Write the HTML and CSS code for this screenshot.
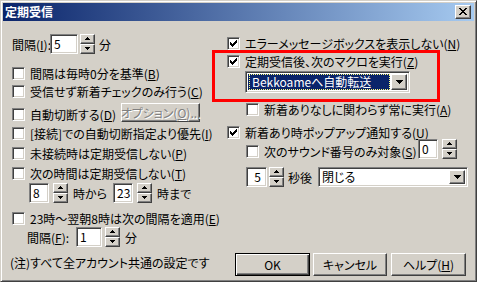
FILE: index.html
```html
<!DOCTYPE html>
<html lang="ja">
<head>
    <meta charset="UTF-8">
    <title>定期受信</title>
    <link rel="stylesheet" href="styles.css">
</head>
<body>
<div class="window">
    <div class="titlebar">
        <span class="title">定期受信</span>
        <span class="close raised">
            <svg width="8" height="7" viewBox="0 0 8 7" shape-rendering="crispEdges"><path d="M0 0h2v1h-2z M6 0h2v1h-2z M1 1h2v1h-2z M5 1h2v1h-2z M2 2h4v1h-4z M3 3h2v1h-2z M2 4h4v1h-4z M1 5h2v1h-2z M5 5h2v1h-2z M0 6h2v1h-2z M6 6h2v1h-2z"/></svg>
        </span>
    </div>

    <div class="content">
        <!-- left column -->
        <div class="col left">
            <div class="row r-int">
                <span class="lbl-int">間隔(<u>I</u>):</span>
                <span class="field num w28">5</span>
                <span class="spin ml2"><span class="sb up"></span><span class="sb down"></span></span>
                <span class="ml4">分</span>
            </div>
            <label class="cb mt13"><span class="box"></span>間隔は毎時0分を基準(<u>B</u>)</label>
            <label class="cb mt5"><span class="box"></span>受信せず新着チェックのみ行う(<u>C</u>)</label>
            <div class="cb mt10">
                <span class="box"></span>自動切断する(<u>D</u>)
                <span class="btn disabled opt">オプション(<u>O</u>)...</span>
            </div>
            <label class="cb mt6"><span class="box"></span>[接続]での自動切断指定より優先(<u>I</u>)</label>
            <label class="cb mt7"><span class="box"></span>未接続時は定期受信しない(<u>P</u>)</label>
            <label class="cb mt7"><span class="box"></span>次の時間は定期受信しない(<u>T</u>)</label>
            <div class="row r-time">
                <span class="field num w20">8</span>
                <span class="spin ml4"><span class="sb up"></span><span class="sb down"></span></span>
                <span class="ml5 w36">時から</span>
                <span class="field num w20 ml4">23</span>
                <span class="spin ml4"><span class="sb up"></span><span class="sb down"></span></span>
                <span class="ml5">時まで</span>
            </div>
            <label class="cb mt9"><span class="box"></span>23時～翌朝8時は次の間隔を適用(<u>E</u>)</label>
            <div class="row r-int2">
                <span class="lbl-int2">間隔(<u>F</u>):</span>
                <span class="field num w26">1</span>
                <span class="spin ml3"><span class="sb up"></span><span class="sb down"></span></span>
                <span class="ml5">分</span>
            </div>
            <div class="note">(注)すべて全アカウント共通の設定です</div>
        </div>

        <!-- right column -->
        <div class="col right">
            <label class="cb mt16"><span class="box on"></span>エラーメッセージボックスを表示しない(<u>N</u>)</label>
            <label class="cb mt5"><span class="box on"></span>定期受信後、次のマクロを実行(<u>Z</u>)</label>
            <div class="combo macro">
                <span class="combo-val sel"><span class="focus">Bekkoameへ自動転送</span></span>
                <span class="combo-btn raised"></span>
            </div>
            <label class="cb mt10 ind"><span class="box"></span>新着ありなしに関わらず常に実行(<u>A</u>)</label>
            <label class="cb mt10"><span class="box on"></span>新着あり時ポップアップ通知する(<u>U</u>)</label>
            <div class="row r-sound">
                <label class="cb snd"><span class="box"></span>次のサウンド番号のみ対象(<u>S</u>)</label>
                <span class="field num w20">0</span>
                <span class="spin ml4"><span class="sb up"></span><span class="sb down"></span></span>
            </div>
            <div class="row r-sec">
                <span class="field num w21 right-num">5</span>
                <span class="spin ml2"><span class="sb up"></span><span class="sb down"></span></span>
                <span class="ml4 w27">秒後</span>
                <div class="combo close-sel">
                    <span class="combo-val">閉じる</span>
                    <span class="combo-btn raised"></span>
                </div>
            </div>
            <div class="buttons">
                <span class="btn default">OK</span>
                <span class="btn">キャンセル</span>
                <span class="btn">ヘルプ(<u>H</u>)</span>
            </div>
        </div>
    </div>

    <div class="mark"></div>
</div>
</body>
</html>
```

FILE: styles.css
```css
html, body { margin: 0; padding: 0; }
body {
    width: 477px;
    height: 282px;
    overflow: hidden;
    font-family: "Noto Sans CJK JP", sans-serif;
    font-size: 12px;
    font-feature-settings: "palt";
    color: #000;
}
u { text-decoration: underline; text-underline-offset: 1px; }

.window {
    position: relative;
    width: 477px;
    height: 282px;
    box-sizing: border-box;
    background: #d4d0c8;
    border: 1px solid;
    border-color: #d4d0c8 #404040 #404040 #d4d0c8;
    box-shadow: inset 1px 1px #fff, inset -1px -1px #808080;
    padding: 2px;
    display: flex;
    flex-direction: column;
}

.titlebar {
    height: 18px;
    flex: none;
    display: flex;
    align-items: center;
    padding: 0 3px 0 2px;
    background: linear-gradient(to right, #0a246a, #a6caf0);
    color: #fff;
}
.title { font-weight: bold; line-height: 18px; font-feature-settings: normal; }

.raised {
    box-sizing: border-box;
    background: #d4d0c8;
    border: 1px solid;
    border-color: #fff #404040 #404040 #fff;
    box-shadow: inset -1px -1px #808080;
}
.close {
    margin-left: auto;
    width: 16px;
    height: 14px;
    display: flex;
    align-items: center;
    justify-content: center;
}
.close svg { display: block; margin-left: -1px; margin-top: -1px; }

.content { flex: 1; display: flex; }
.col { display: flex; flex-direction: column; }
.left { width: 224px; padding-left: 9px; padding-top: 13px; box-sizing: border-box; }
.right { flex: 1; }

.row { display: flex; align-items: center; white-space: nowrap; }

/* checkbox */
.cb { display: flex; align-items: center; height: 13px; line-height: 13px; white-space: nowrap; }
.box {
    width: 13px;
    height: 13px;
    flex: none;
    box-sizing: border-box;
    margin-right: 5px;
    background: #fff;
    border: 1px solid;
    border-color: #808080 #fff #fff #808080;
    box-shadow: inset 1px 1px #404040, inset -1px -1px #d4d0c8;
}
.box.on {
    background: #fff url("data:image/svg+xml;utf8,<svg xmlns='http://www.w3.org/2000/svg' width='7' height='7' shape-rendering='crispEdges'><path d='M6 0h1v1h-1z M5 1h2v1h-2z M0 2h1v1h-1z M4 2h3v1h-3z M0 3h2v1h-2z M3 3h3v1h-3z M0 4h5v1h-5z M1 5h3v1h-3z M2 6h1v1h-1z'/></svg>") no-repeat 2px 2px;
}

/* sunken text field */
.field {
    box-sizing: border-box;
    height: 20px;
    flex: none;
    background: #fff;
    border: 1px solid;
    border-color: #808080 #fff #fff #808080;
    box-shadow: inset 1px 1px #404040, inset -1px -1px #d4d0c8;
    padding: 0 3px;
    line-height: 18px;
}
.w20 { width: 20px; }
.w21 { width: 21px; }
.w26 { width: 26px; }
.w27 { width: 27px; }
.w28 { width: 28px; }
.w36 { width: 36px; }
.right-num { text-align: right; padding-right: 5px; }

/* spinner */
.spin { display: flex; flex-direction: column; width: 15px; height: 20px; flex: none; }
.sb {
    flex: 1;
    box-sizing: border-box;
    background: #d4d0c8;
    border: 1px solid;
    border-color: #fff #404040 #404040 #fff;
    box-shadow: inset -1px -1px #808080;
    background-repeat: no-repeat;
    background-position: 4px 2px;
}
.sb.up { background-image: url("data:image/svg+xml;utf8,<svg xmlns='http://www.w3.org/2000/svg' width='5' height='3' shape-rendering='crispEdges'><path d='M2 0h1v1h-1z M1 1h3v1h-3z M0 2h5v1h-5z'/></svg>"); }
.sb.down { background-image: url("data:image/svg+xml;utf8,<svg xmlns='http://www.w3.org/2000/svg' width='5' height='3' shape-rendering='crispEdges'><path d='M0 0h5v1h-5z M1 1h3v1h-3z M2 2h1v1h-1z'/></svg>"); }

.ml2 { margin-left: 2px; }
.ml3 { margin-left: 3px; }
.ml4 { margin-left: 4px; }
.ml5 { margin-left: 5px; }
.mt5 { margin-top: 5px; }
.mt6 { margin-top: 6px; }
.mt7 { margin-top: 7px; }
.mt9 { margin-top: 9px; }
.mt10 { margin-top: 10px; }
.mt13 { margin-top: 13px; }
.mt16 { margin-top: 16px; }

/* left column rows */
.r-int { height: 20px; }
.lbl-int { width: 38px; }
.r-time { height: 20px; margin-top: 3px; padding-left: 17px; }
.r-int2 { height: 20px; margin-top: 2px; padding-left: 15px; }
.lbl-int2 { width: 49px; }
.note { margin-top: 9px; height: 14px; line-height: 14px; margin-left: -2px; white-space: nowrap; }

/* buttons */
.btn {
    box-sizing: border-box;
    display: flex;
    align-items: center;
    justify-content: center;
    height: 23px;
    width: 75px;
    background: #d4d0c8;
    border: 1px solid;
    border-color: #fff #404040 #404040 #fff;
    box-shadow: inset -1px -1px #808080;
    white-space: nowrap;
}
.btn.default {
    border-color: #000;
    box-shadow: inset 1px 1px #fff, inset -1px -1px #404040, inset -2px -2px #808080;
}
.btn.disabled { color: #808080; text-shadow: 1px 1px #fff; }
.opt { width: 79px; height: 19px; margin-left: 5px; align-self: flex-start; margin-top: -5px; }

/* combo boxes */
.combo {
    box-sizing: border-box;
    display: flex;
    flex: none;
    background: #fff;
    border: 1px solid;
    border-color: #808080 #fff #fff #808080;
    box-shadow: inset 1px 1px #404040, inset -1px -1px #d4d0c8;
    padding: 2px;
}
.combo-val { flex: 1; line-height: 16px; padding-left: 1px; white-space: nowrap; }
.combo-btn {
    width: 16px;
    flex: none;
    background-image: url("data:image/svg+xml;utf8,<svg xmlns='http://www.w3.org/2000/svg' width='7' height='4' shape-rendering='crispEdges'><path d='M0 0h7v1h-7z M1 1h5v1h-5z M2 2h3v1h-3z M3 3h1v1h-1z'/></svg>");
    background-repeat: no-repeat;
    background-position: center;
}
.macro { width: 165px; height: 22px; margin-left: 18px; margin-top: 3px; }
.macro .combo-val { background: #0a246a; color: #fff; margin-right: 1px; display: flex; }
.focus { flex: 1; border: 1px dotted #ffff80; line-height: 14px; padding-left: 2px; }
.close-sel { width: 150px; height: 20px; margin-left: 3px; padding: 2px; }
.close-sel .combo-val { line-height: 14px; }

.ind { margin-left: 19px; }
.r-sound { height: 20px; align-items: flex-start; padding-left: 19px; padding-right: 17px; }
.snd { flex: 1; margin-top: 6px; }
.r-sec { height: 20px; margin-top: 8px; padding-left: 19px; }

.buttons { display: flex; gap: 3px; margin-top: 66px; margin-left: 8px; }
.buttons .btn:nth-child(2) { width: 74px; margin-right: 1px; }

/* red highlight drawn over the dialog */
.mark {
    position: absolute;
    left: 211px;
    top: 49px;
    width: 228px;
    height: 52px;
    box-sizing: border-box;
    border: 3px solid #ff0000;
    pointer-events: none;
}
```
